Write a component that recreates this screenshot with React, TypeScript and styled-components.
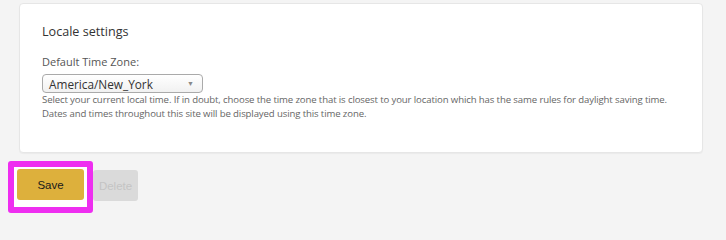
import React from 'react';
import styled, {createGlobalStyle} from "styled-components";

const GlobalStyle = createGlobalStyle`
  html, body {
    margin: 0;
    padding: 0;
    background: #f4f4f4;
  }
`

const Page = styled.div`
  padding: 3px 23px 0 19px;
  font-family: "Open Sans", "Liberation Sans", sans-serif;
`

const Card = styled.section`
  background: #fff;
  border: 1px solid #e6e6e6;
  border-radius: 4px;
  box-shadow: 0 1px 1px rgba(0, 0, 0, 0.04);
  height: 150px;
  box-sizing: border-box;
  padding: 18px 22px 0 22px;
`

const Title = styled.h2`
  margin: 0 0 12px 0;
  font-size: 12.6px;
  font-weight: 400;
  color: #333;
  line-height: 20px;
`

const Label = styled.label`
  display: block;
  font-size: 11px;
  color: #555;
  line-height: 16px;
  margin-bottom: 4px;
`

const SelectBox = styled.div`
  width: 161px;
  height: 19px;
  box-sizing: border-box;
  border: 1px solid #aaa;
  border-radius: 4px;
  background: linear-gradient(#ffffff, #f1f1f1);
  display: flex;
  align-items: center;
  justify-content: space-between;
  padding: 0 8px 0 6px;
  font-size: 11.8px;
  color: #333;
`

const Arrow = styled.span`
  font-size: 7px;
  color: #888;
`

const Help = styled.p`
  margin: 0;
  font-size: 9.6px;
  letter-spacing: -0.12px;
  line-height: 14px;
  color: #666;
  white-space: nowrap;
`

const Actions = styled.div`
  display: flex;
  align-items: flex-start;
  margin: 8px 0 0 -11px;
`

const Highlight = styled.div`
  border: 6px solid #ee2ef0;
  border-radius: 3px;
  background: #fff;
  padding: 2px 3px 7px 3px;
`

const Button = styled.button<{ $primary?: boolean }>`
  height: 31px;
  border: none;
  border-radius: 3px;
  font-family: "Liberation Sans", Arial, sans-serif;
  font-size: 11.5px;
  padding: 0;
  background: ${p => p.$primary ? '#ddb03c' : '#dadada'};
  color: ${p => p.$primary ? '#1a1a1a' : '#c4c4c4'};
  width: ${p => p.$primary ? '67px' : '45px'};
  margin-top: ${p => p.$primary ? '0' : '9px'};
`

const App: React.FC = () => {
    return (
        <Page>
            <GlobalStyle/>
            <Card>
                <Title>Locale settings</Title>
                <Label>Default Time Zone:</Label>
                <SelectBox>
                    America/New_York
                    <Arrow>▼</Arrow>
                </SelectBox>
                <Help>
                    Select your current local time. If in doubt, choose the time zone that is closest to your location which has the same rules for daylight saving time.
                    <br/>
                    Dates and times throughout this site will be displayed using this time zone.
                </Help>
            </Card>
            <Actions>
                <Highlight>
                    <Button $primary>Save</Button>
                </Highlight>
                <Button disabled>Delete</Button>
            </Actions>
        </Page>
    );
}

export default App;
